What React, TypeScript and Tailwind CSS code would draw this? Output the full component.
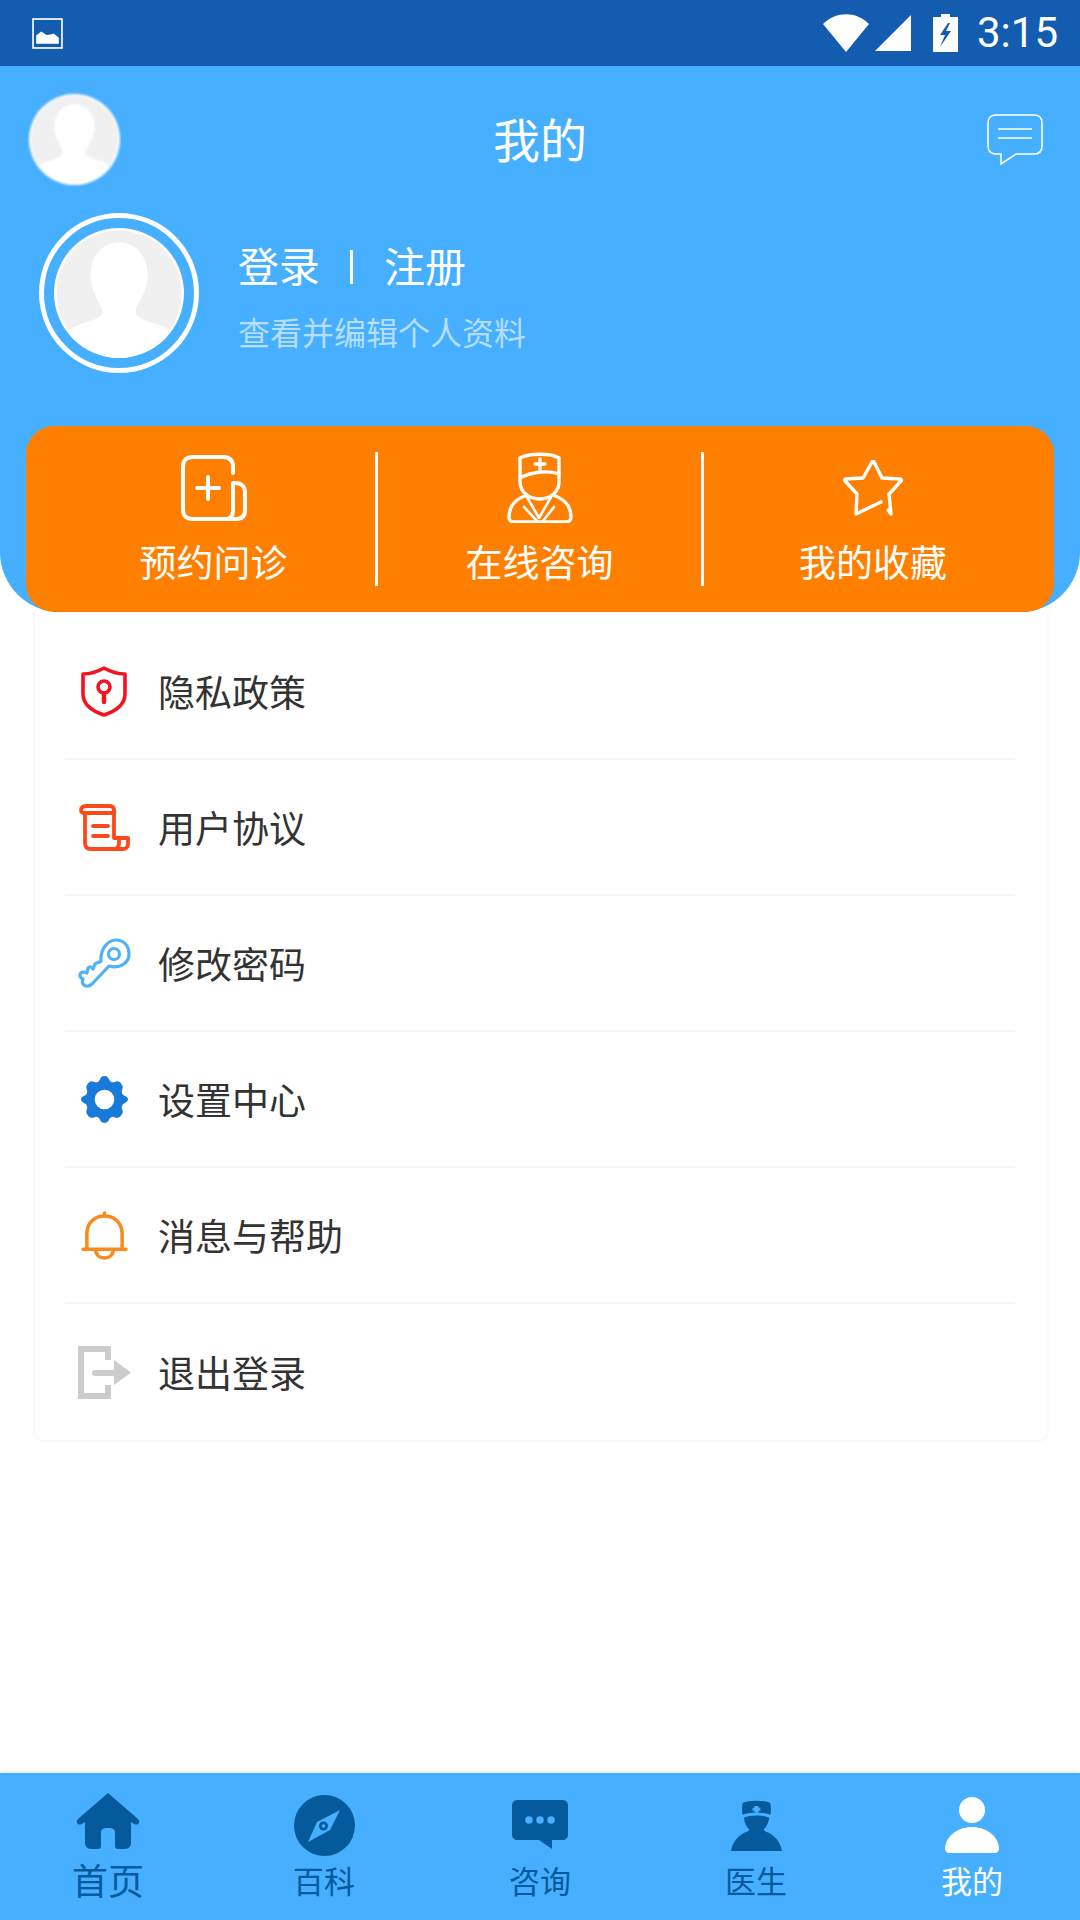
import React from "react";

const menu = [
  { label: "隐私政策", icon: <ShieldIcon /> },
  { label: "用户协议", icon: <ScrollIcon /> },
  { label: "修改密码", icon: <KeyIcon /> },
  { label: "设置中心", icon: <GearIcon /> },
  { label: "消息与帮助", icon: <BellIcon /> },
  { label: "退出登录", icon: <ExitIcon /> },
];

function Avatar({ className }: { className: string }) {
  return (
    <svg viewBox="0 0 100 100" className={className}>
      <circle cx="50" cy="50" r="50" fill="#fff" />
      <circle cx="50" cy="50" r="48" fill="#f0f0f0" />
      <path
        d="M50 11C37 11 28 22 28 36C28 47 33 54 37 62C38 66 36 68 32 70C25 73 17 74 11 79C20 91 34 100 50 100C66 100 80 91 89 79C83 74 75 73 68 70C64 68 62 66 63 62C67 54 72 47 72 36C72 22 63 11 50 11Z"
        fill="#fff"
      />
    </svg>
  );
}

function WifiIcon() {
  return (
    <svg viewBox="0 0 46 38" className="w-[46px] h-[38px]">
      <path d="M0 10C13 -3 33 -3 46 10L23 38Z" fill="#fff" />
    </svg>
  );
}

function SignalIcon() {
  return (
    <svg viewBox="0 0 36 36" className="w-[36px] h-[36px]">
      <path d="M36 0V36H0Z" fill="#fff" />
    </svg>
  );
}

function BatteryIcon() {
  return (
    <svg viewBox="0 0 25 38" className="w-[25px] h-[38px]">
      <path d="M8 0H17V3H25V38H0V3H8Z" fill="#fff" />
      <path d="M15 9L7 21H12L7 33L18 17H13L17 9Z" fill="#135cb0" />
    </svg>
  );
}

function MessageIcon() {
  return (
    <svg viewBox="0 0 56 52" className="w-[56px] h-[52px]" fill="none" stroke="#fff" strokeWidth="1.6">
      <path d="M9 1H47C52 1 55 4 55 9V32C55 37 52 40 47 40H29L14 50V40H9C4 40 1 37 1 32V9C1 4 4 1 9 1Z" />
      <path d="M11 15H45M11 24H45" />
    </svg>
  );
}

function BookIcon() {
  return (
    <svg viewBox="0 0 66 66" className="w-[66px] h-[66px]" fill="none" stroke="#fff" strokeWidth="4" strokeLinecap="round" strokeLinejoin="round">
      <path d="M52 18V12C52 5 48 2 42 2H12C5 2 2 5 2 12V54C2 61 5 64 12 64H55C61 64 64 61 64 55V38C64 31 61 28 54 28H52V56C52 60 50 63 46 64" />
      <path d="M16 33H38M27 22V44" />
    </svg>
  );
}

function DoctorIcon() {
  return (
    <svg viewBox="0 0 66 71" className="w-[66px] h-[71px]" fill="none" stroke="#fff" strokeWidth="3.400" strokeLinecap="round" strokeLinejoin="round">
      <path d="M13 26V6C22 1 44 1 52 6V22C40 18 24 20 13 26Z" />
      <path d="M33 7V17M28 12H38" />
      <path d="M13 26V30C13 40 22 47 33 47C43 47 52 40 52 30V22" />
      <path d="M20 43C8 47 2 54 2 65C2 68 4 70 7 70H59C62 70 64 68 64 65C64 54 58 47 46 43" />
      <path d="M20 45L32 66L44 45M17 55L30 69M47 55L36 69" strokeWidth="2.600" />
    </svg>
  );
}

function StarIcon() {
  return (
    <svg viewBox="0 0 60 56" className="w-[60px] h-[56px]" fill="none" stroke="#fff" strokeWidth="3.400" strokeLinecap="round" strokeLinejoin="round">
      <path d="M38 42L13 54L14 34L2 21C1 20 2 19 3 19L20 18L29 2C29.500 1 30.500 1 31 2L39 18L57 19C58 19 59 20 58 21L46 34L48 54L45 50" />
    </svg>
  );
}

function ShieldIcon() {
  return (
    <svg viewBox="0 0 46 51" className="w-[46px] h-[51px]" fill="none" stroke="#f5121d" strokeWidth="3.600" strokeLinecap="round" strokeLinejoin="round">
      <path d="M23 2C30 6 37 8 44 8V28C44 38 35 45 23 49C11 45 2 38 2 28V8C9 8 16 6 23 2Z" />
      <circle cx="23" cy="21" r="6" />
      <path d="M23 27V36" strokeWidth="4.400" />
    </svg>
  );
}

function ScrollIcon() {
  return (
    <svg viewBox="0 0 51 47" className="w-[51px] h-[47px]" fill="none" stroke="#fb4a1a" strokeWidth="3.800" strokeLinecap="round" strokeLinejoin="round">
      <path d="M8 2H31C34 2 35 4 35 7V9H5C3 9 2 8 2 6C2 3 4 2 8 2Z" />
      <path d="M6 9V39C6 43 8 45 12 45H44C47 45 49 43 49 40V34H40V39C40 43 38 45 35 45M35 7V34H40" />
      <path d="M14 22H29M14 32H29" />
    </svg>
  );
}

function KeyIcon() {
  return (
    <svg viewBox="0 0 53 50" className="w-[53px] h-[50px]" fill="none" stroke="#4fb1f7" strokeWidth="3.200" strokeLinecap="round" strokeLinejoin="round">
      <path d="M23 23C22 11 30 2 38 2C46 2 51 8 51 16C51 25 42 31 31 28L14 46C11 49 7 49 5 46C4 44 4 43 5 41C2 40 1 37 3 35C5 33 7 34 9 35L10 30C12 28 14 29 15 31L17 26C19 24 21 25 23 23Z" />
      <circle cx="36" cy="16" r="5.500" />
    </svg>
  );
}

function GearIcon() {
  return (
    <svg viewBox="0 0 48 48" className="w-[47px] h-[47px]">
      <path
        fillRule="evenodd"
        d="M24 0C27 0 28 2 29 4C30 6 32 7 34 6C37 5 39 5 41 8C43 10 43 12 42 14C41 16 42 19 44 20C46 21 48 22 48 24C48 26 46 27 44 28C42 29 41 32 42 34C43 36 43 38 41 40C39 43 37 43 34 42C32 41 30 42 29 44C28 46 27 48 24 48C21 48 20 46 19 44C18 42 16 41 14 42C11 43 9 43 7 40C5 38 5 36 6 34C7 32 6 29 4 28C2 27 0 26 0 24C0 22 2 21 4 20C6 19 7 16 6 14C5 12 5 10 7 8C9 5 11 5 14 6C16 7 18 6 19 4C20 2 21 0 24 0ZM24 14A10 10 0 1 0 24 34A10 10 0 1 0 24 14Z"
        fill="#1a7ada"
      />
    </svg>
  );
}

function BellIcon() {
  return (
    <svg viewBox="0 0 48 50" className="w-[47px] h-[49px]" fill="none" stroke="#fb8a1e" strokeWidth="3.600" strokeLinecap="round" strokeLinejoin="round">
      <path d="M24 2V5M6 39V23C6 12 14 5 24 5C34 5 42 12 42 23V39M2 39H46M15 39C15 45 19 48 24 48C29 48 33 45 33 39" />
    </svg>
  );
}

function ExitIcon() {
  return (
    <svg viewBox="0 0 53 53" className="w-[53px] h-[53px]" fill="#cccccc">
      <path d="M0 0H33V14H27V6H6V47H27V39H33V53H0Z" />
      <path d="M17 24H36V14L53 26.500L36 39V30H17C15 30 14 29 14 27C14 25 15 24 17 24Z" />
    </svg>
  );
}

function HomeIcon() {
  return (
    <svg viewBox="0 0 64 56" className="w-[64px] h-[56px]" fill="#055a9c">
      <path d="M32 0L62 26C65 29 62 33 58 31L55 29V49C55 53 53 56 49 56H42C40 56 39 55 39 53V40C39 36 37 35 32 35C27 35 25 36 25 40V53C25 55 24 56 22 56H15C11 56 9 53 9 49V29L6 31C2 33 -1 29 2 26Z" />
    </svg>
  );
}

function CompassIcon() {
  return (
    <svg viewBox="0 0 61 61" className="w-[61px] h-[61px]">
      <circle cx="30.500" cy="30.500" r="30.500" fill="#055a9c" />
      <path d="M46 15L36 35L14 47L23 27Z" fill="#47afff" />
      <circle cx="29.500" cy="31" r="4.500" fill="#055a9c" />
      <circle cx="29.500" cy="31" r="1.800" fill="#47afff" />
    </svg>
  );
}

function ChatIcon() {
  return (
    <svg viewBox="0 0 56 49" className="w-[56px] h-[49px]">
      <path d="M6 0H50C54 0 56 2 56 6V34C56 38 54 40 50 40H40V49L27 40H6C2 40 0 38 0 34V6C0 2 2 0 6 0Z" fill="#055a9c" />
      <circle cx="17" cy="20" r="3.800" fill="#47afff" />
      <circle cx="28" cy="20" r="3.800" fill="#47afff" />
      <circle cx="39" cy="20" r="3.800" fill="#47afff" />
    </svg>
  );
}

function NurseIcon() {
  return (
    <svg viewBox="0 0 52 52" className="w-[51px] h-[51px]" fill="#055a9c">
      <path d="M12 3C18 0 34 0 40 3C41 7 41 12 40 15C32 12 20 12 12 15C11 12 11 7 12 3Z" />
      <path d="M13 18C20 15 32 15 39 18C38 24 36 28 33 30L35 32C45 35 51 44 52 52H0C1 44 7 35 17 32L19 30C16 28 14 24 13 18Z" />
      <path d="M24 6H28V8H30V11H28V13H24V11H22V8H24Z" fill="#47afff" />
    </svg>
  );
}

function PersonIcon() {
  return (
    <svg viewBox="0 0 54 56" className="w-[54px] h-[56px]" fill="#fff">
      <circle cx="27" cy="13" r="13" />
      <path d="M27 30C42 30 54 40 54 52C54 54 52 56 50 56H4C2 56 0 54 0 52C0 40 12 30 27 30Z" />
    </svg>
  );
}

export default function App() {
  return (
    <div
      className="relative w-[1080px] h-[1920px] bg-white flex flex-col overflow-hidden"
      style={{ fontFamily: '"Noto Sans CJK SC", "Noto Sans", sans-serif' }}
    >
      <header className="h-[612px] shrink-0 bg-[#47afff] rounded-b-[60px] flex flex-col">
        <div className="h-[66px] bg-[#135cb0] flex items-center pl-[32px] pr-[22px]">
          <svg viewBox="0 0 30 30" className="w-[31px] h-[31px]" fill="none">
            <rect x="1" y="1" width="28" height="28" stroke="#fff" strokeWidth="1.600" />
            <path d="M4 25V17L9 13L14 16.500L18 16L21 15L26 19V25Z" fill="#fff" />
          </svg>
          <div className="ml-auto flex items-center">
            <WifiIcon />
            <div className="ml-[6px]"><SignalIcon /></div>
            <div className="ml-[22px]"><BatteryIcon /></div>
            <span className="ml-[19px] text-[42px] leading-none text-white" style={{ fontFamily: "Roboto, sans-serif" }}>3:15</span>
          </div>
        </div>

        <div className="grid grid-cols-[1fr_auto_1fr] items-center px-[29px] pt-[28px]">
          <Avatar className="w-[91px] h-[91px] blur-[1px]" />
          <h1 className="pb-[4px] text-[47px] leading-[58px] font-normal text-white">我的</h1>
          <div className="justify-self-end mr-[8px]"><MessageIcon /></div>
        </div>

        <div className="flex items-start pl-[39px] mt-[28px]">
          <div className="w-[160px] h-[160px] rounded-full border-[5px] border-white flex items-center justify-center">
            <Avatar className="w-[130px] h-[130px]" />
          </div>
          <div className="ml-[39px] pt-[25px]">
            <div className="flex items-center h-[54px] text-[41px] text-white">
              <span>登录</span>
              <span className="ml-[30px] mr-[31px] mt-[4px] w-[3px] h-[34px] bg-white" />
              <span>注册</span>
            </div>
            <p className="mt-[16px] text-[32px] leading-[46px] text-[#b5deff]">查看并编辑个人资料</p>
          </div>
        </div>

        <div className="mx-[26px] mt-[53px] h-[186px] rounded-[28px] bg-[#ff7f00] flex items-stretch py-[26px] text-white">
          <div className="w-[352px] pl-[26px] flex flex-col items-center border-r-[3px] border-white">
            <div className="h-[71px] flex items-center"><BookIcon /></div>
            <span className="mt-[16px] text-[37px] leading-[44px]">预约问诊</span>
          </div>
          <div className="w-[326px] flex flex-col items-center border-r-[3px] border-white">
            <div className="h-[71px] flex items-center"><DoctorIcon /></div>
            <span className="mt-[16px] text-[37px] leading-[44px]">在线咨询</span>
          </div>
          <div className="flex-1 pr-[12px] flex flex-col items-center">
            <div className="h-[71px] flex items-center"><StarIcon /></div>
            <span className="mt-[16px] text-[37px] leading-[44px]">我的收藏</span>
          </div>
        </div>
      </header>

      <main className="ml-[33px] mr-[31px] pt-[12px] border-x-2 border-b-2 border-[#fafafa] rounded-b-[10px]">
        {menu.map((item, i) => (
          <div
            key={item.label}
            className={`ml-[30px] mr-[32px] h-[136px] pl-[11px] flex items-center border-[#f6f6f6] ${i < menu.length - 1 ? "border-b-2" : ""}`}
          >
            <div className="w-[56px] flex justify-center">{item.icon}</div>
            <span className="ml-[26px] text-[37px] leading-[50px] text-[#333333]">{item.label}</span>
          </div>
        ))}
      </main>

      <nav className="mt-auto h-[147px] bg-[#47afff] grid grid-cols-5 shadow-[0_-2px_3px_rgba(0,0,0,0.08)]">
        <div className="flex flex-col items-center pt-[20px]">
          <HomeIcon />
          <span className="mt-[7px] text-[36px] leading-[46px] text-[#055a9c]">首页</span>
        </div>
        <div className="flex flex-col items-center pt-[22px]">
          <CompassIcon />
          <span className="mt-[3px] text-[31px] leading-[42px] text-[#055a9c]">百科</span>
        </div>
        <div className="flex flex-col items-center pt-[27px]">
          <ChatIcon />
          <span className="mt-[10px] text-[31px] leading-[42px] text-[#055a9c]">咨询</span>
        </div>
        <div className="flex flex-col items-center pt-[27px]">
          <NurseIcon />
          <span className="mt-[8px] text-[31px] leading-[42px] text-[#055a9c]">医生</span>
        </div>
        <div className="flex flex-col items-center pt-[24px]">
          <PersonIcon />
          <span className="mt-[6px] text-[31px] leading-[42px] text-white">我的</span>
        </div>
      </nav>
    </div>
  );
}
